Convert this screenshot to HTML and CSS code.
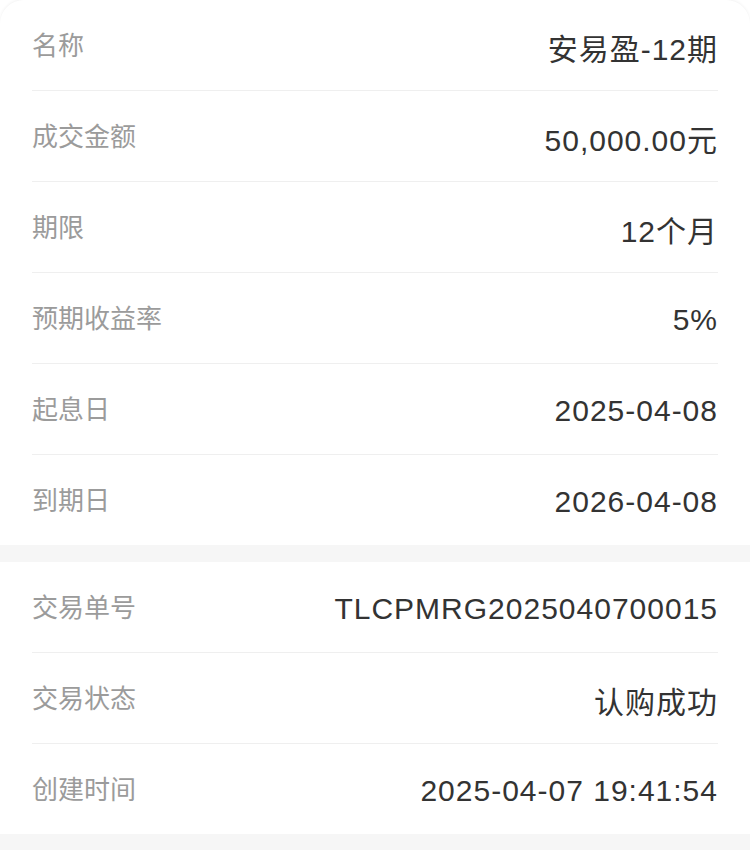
FILE: index.html
```html
<!DOCTYPE html>
<html lang="zh-CN">
<head>
<meta charset="UTF-8">
<meta name="viewport" content="width=device-width, initial-scale=1.0">
<title>交易详情</title>
<link rel="stylesheet" href="styles.css">
</head>
<body>
<div class="page">
    <!-- 产品信息 -->
    <div class="card card-top">
        <div class="row">
            <span class="label">名称</span>
            <span class="value">安易盈-12期</span>
        </div>
        <div class="row">
            <span class="label">成交金额</span>
            <span class="value">50,000.00元</span>
        </div>
        <div class="row">
            <span class="label">期限</span>
            <span class="value">12个月</span>
        </div>
        <div class="row">
            <span class="label">预期收益率</span>
            <span class="value">5%</span>
        </div>
        <div class="row">
            <span class="label">起息日</span>
            <span class="value">2025-04-08</span>
        </div>
        <div class="row">
            <span class="label">到期日</span>
            <span class="value">2026-04-08</span>
        </div>
    </div>

    <div class="gap"></div>

    <!-- 交易信息 -->
    <div class="card card-second">
        <div class="row">
            <span class="label">交易单号</span>
            <span class="value">TLCPMRG2025040700015</span>
        </div>
        <div class="row">
            <span class="label">交易状态</span>
            <span class="value">认购成功</span>
        </div>
        <div class="row">
            <span class="label">创建时间</span>
            <span class="value">2025-04-07 19:41:54</span>
        </div>
    </div>

    <div class="gap gap-bottom"></div>
</div>
</body>
</html>
```

FILE: styles.css
```css
body {
    margin: 0;
    padding: 0;
    background-color: #fff;
    font-family: "Liberation Sans", "Noto Sans CJK SC", sans-serif;
}

.page {
    width: 750px;
    height: 850px;
    overflow: hidden;
}

.card {
    background-color: #fff;
    padding: 0 32px;
}

.card-top {
    border-radius: 24px 24px 0 0;
    box-shadow: 0 -1px 3px rgba(0, 0, 0, 0.05);
}

.card-second {
    margin-top: -2px;
}

.row {
    display: flex;
    justify-content: space-between;
    align-items: center;
    height: 90px;
    border-bottom: 1px solid #efefef;
}

.row:last-child {
    border-bottom: none;
}

.label {
    margin-bottom: 4px;
    font-size: 26px;
    color: #9b9b9b;
}

.value {
    margin-top: 4px;
    font-size: 30px;
    letter-spacing: 1px;
    color: #333;
}

.gap {
    height: 19px;
    background-color: #f6f6f6;
}

.gap-bottom {
    height: 40px;
}
```
